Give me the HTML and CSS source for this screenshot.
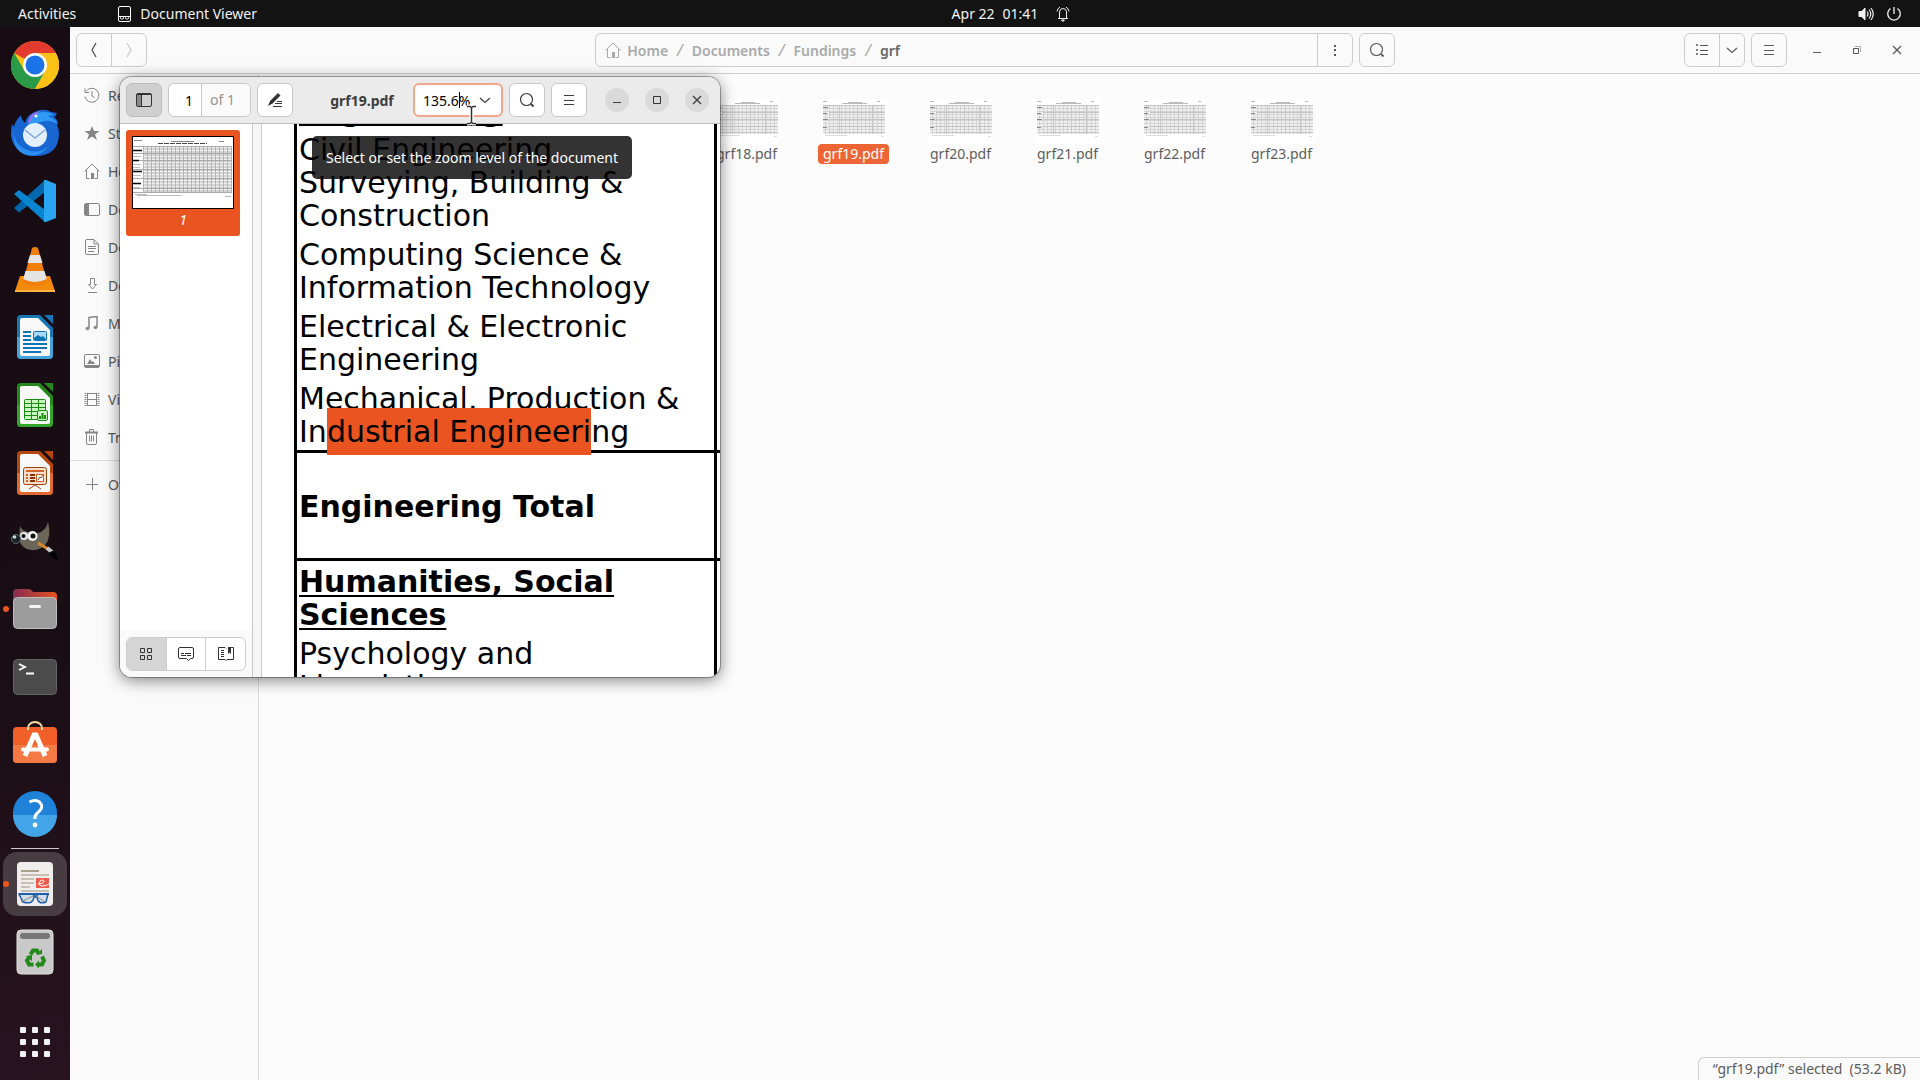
FILE: index.html
```html
<!DOCTYPE html>
<html lang="en">
<head>
    <meta charset="UTF-8">
    <meta name="viewport" content="width=device-width, initial-scale=1.0">
    <title>grf19.pdf</title>
    <link rel="stylesheet" href="styles.css">
</head>
<body>
    <!-- Shared symbols -->
    <svg class="defs" aria-hidden="true">
        <defs>
            <pattern id="cells" width="4" height="3" patternUnits="userSpaceOnUse">
                <rect width="4" height="3" fill="#f0f0f0"/>
                <path d="M0 .5h3M3.5 0v3" stroke="#d4d4d4" stroke-width="1"/>
            </pattern>
            <pattern id="cells-dark" width="4" height="3" patternUnits="userSpaceOnUse">
                <rect width="4" height="3" fill="#f4f4f4"/>
                <path d="M0 1h3M3.5 0v3" stroke="#b4b4b4" stroke-width="1"/>
            </pattern>
            <symbol id="sheet" viewBox="0 0 64 45">
                <rect width="64" height="45" fill="#fff"/>
                <path d="M1 2.500h4M26 3.500h14M20 4.500h25M55 2.500h3" stroke="#bbb"/>
                <rect x="1" y="6" width="62" height="29" fill="url(#cells)"/>
                <path d="M1 6.500h62M7 13.500h56M7 20.500h56M7 27.500h56M7 33.500h56" stroke="#c4c4c4"/>
                <path d="M17.500 6v29M35.500 6v29M50.500 6v29" stroke="#cacaca"/>
                <path d="M1 8.500h5M1 14.500h4M1 20.500h5M1 28.500h4" stroke="#888"/>
                <path d="M3 36.500h22M59 37.500h3" stroke="#ddd"/>
            </symbol>
            <symbol id="house" viewBox="0 0 16 16">
                <path d="M.5 8.500 8 1l7.500 7.500M2.500 7v8.500h3M13.500 7v8.500h-3" fill="none" stroke="currentColor"/>
                <path d="M7 10h3v6H7z" fill="currentColor"/>
            </symbol>
            <symbol id="lens" viewBox="0 0 16 16">
                <circle cx="7.500" cy="7.500" r="6" fill="none" stroke="currentColor" stroke-width="1.200"/>
                <path d="m12 12 2.500 2.500" stroke="currentColor" stroke-width="1.800"/>
            </symbol>
            <symbol id="burger" viewBox="0 0 16 16">
                <path d="M3 3.500h10M3 8.500h10M3 12.500h10" stroke="currentColor"/>
            </symbol>
            <symbol id="chevron" viewBox="0 0 16 16">
                <path d="m3 6 5 4.500L13 6" fill="none" stroke="currentColor" stroke-width="1.200"/>
            </symbol>
            <symbol id="cross" viewBox="0 0 16 16">
                <path d="m4 4 8 8M12 4l-8 8" stroke="currentColor" stroke-width="1.400"/>
            </symbol>
            <symbol id="minus" viewBox="0 0 16 16">
                <path d="M4 10.500h8" stroke="currentColor"/>
            </symbol>
            <symbol id="plus" viewBox="0 0 16 16">
                <path d="M2 8.500h12M8.500 2v12" stroke="currentColor"/>
            </symbol>
        </defs>
    </svg>

    <header class="topbar">
        <div class="topbar-left">
            <button class="topbar-item">Activities</button>
            <button class="topbar-item app-menu">
                <svg width="14" height="16" viewBox="0 0 14 16" fill="none" stroke="#fff">
                    <rect x=".5" y=".5" width="12" height="15" rx="1.500"/>
                    <path d="M1 10.500h11"/>
                    <rect x="2.500" y="10.500" width="3" height="2.500" rx="1"/>
                    <rect x="7.500" y="10.500" width="3" height="2.500" rx="1"/>
                </svg>
                Document Viewer
            </button>
        </div>
        <button class="topbar-item clock">
            <span>Apr 22</span><span>01:41</span>
            <svg width="14" height="16" viewBox="0 0 14 16" fill="none" stroke="#eee">
                <path d="M2 12.500h10M3.500 12V6a3.500 3.500 0 0 1 7 0v6M1 5.500A6 6 0 0 1 4 1M13 5.500A6 6 0 0 0 10 1"/>
                <path d="M5.500 14h3l-1.500 1.500z" fill="#eee"/>
            </svg>
        </button>
        <button class="topbar-item tray" aria-label="System menu">
            <svg width="16" height="16" viewBox="0 0 16 16" fill="none" stroke="#f2f2f2">
                <path d="M1 5.500h2.500L7 2v12l-3.500-3.500H1z" fill="#f2f2f2"/>
                <path d="M9 5.500q2 2.500 0 5M11 3.500q3.500 4.500 0 9M13 2q4.500 6 0 12" stroke-width="1.200"/>
            </svg>
            <svg width="16" height="16" viewBox="0 0 16 16" fill="none" stroke="#f2f2f2" stroke-width="1.300">
                <path d="M8 1v7M4.500 2.500a6.300 6.300 0 1 0 7 0"/>
            </svg>
        </button>
    </header>

    <div class="desktop">
        <nav class="dock" aria-label="Dock">
            <button class="dock-item" aria-label="Google Chrome">
                <svg width="48" height="48" viewBox="0 0 48 48">
                    <circle cx="24" cy="24" r="24" fill="#fbc116"/>
                    <path d="M24 24 3.200 12A24 24 0 0 1 44.800 12H24z" fill="#e33b2e"/>
                    <path d="M3.200 12A24 24 0 0 0 24 48l10.400-18L24 24 13.600 30z" fill="#2a9a48"/>
                    <path d="M24 12h20.800A24 24 0 0 1 24 48l10.400-18z" fill="#fbc116"/>
                    <circle cx="24" cy="24" r="12" fill="#fff"/>
                    <circle cx="24" cy="24" r="9.500" fill="#1a73e8"/>
                </svg>
            </button>
            <button class="dock-item" aria-label="Thunderbird">
                <svg width="48" height="48" viewBox="0 0 48 48">
                    <path d="M24 47C10 47 0 37 0 24q0-5 1-9l2 3q1-6 7-12 0 4 4 8 2-9 12-12 8-3 14 1l6 1q-1 3-3 4 4 3 4 7l-2-1q3 5 3 10 0 23-24 23z" fill="#1766d2"/>
                    <path d="M17 12q5-9 16-9 7 0 10 3-4 0-6 1 8 3 10 9-6-5-13-4-9 1-17 8z" fill="#2f9bf5"/>
                    <path d="M3 18q-2 14 9 21 14 8 26-2-9 12-23 9Q0 41 3 18z" fill="#2b8ef0"/>
                    <path d="M17 14q1-11 13-12-9 4-11 12z" fill="#9d6bf0"/>
                    <circle cx="24" cy="26" r="12" fill="#e3effc"/>
                    <path d="m14 21 10 8 10-8" fill="none" stroke="#7fa9dd" stroke-width="1.500"/>
                    <circle cx="25" cy="7" r="1.500" fill="#fff"/>
                </svg>
            </button>
            <button class="dock-item" aria-label="Visual Studio Code">
                <svg width="48" height="48" viewBox="0 0 48 48">
                    <path d="M3 31 34 3v12L8 35.500z" fill="#0367ae"/>
                    <path d="m3 17 5-4 26 20v12z" fill="#0a85d1"/>
                    <path d="m33 3 2 0 10 4v34l-10 4-2 0z" fill="#2aa5f2"/>
                </svg>
            </button>
            <button class="dock-item" aria-label="VLC">
                <svg width="48" height="48" viewBox="0 0 48 48">
                    <path d="M9 31h30l5 15v1H4v-1z" fill="#f28a0c"/>
                    <path d="M4 45h40v2H4z" fill="#ffb347"/>
                    <path d="M21 3q3-2 6 0l9 34q-12 8-24 0z" fill="#f07f09"/>
                    <path d="m19 10h10l2.500 8h-15zM14.500 26h19l2.300 8q-12 6-23.600 0z" fill="#e4e4e4"/>
                </svg>
            </button>
            <button class="dock-item" aria-label="LibreOffice Writer">
                <svg width="48" height="48" viewBox="0 0 48 48">
                    <path d="M10 2h19l13 13v27q0 4-4 4H10q-4 0-4-4V6q0-4 4-4z" fill="#1577b5"/>
                    <path d="M6 24h36v18q0 4-4 4H10q-4 0-4-4z" fill="#45a3d9"/>
                    <path d="M11 5h16l12 12v24q0 2-2 2H11q-2 0-2-2V7q0-2 2-2z" fill="#f8f8f8"/>
                    <path d="M33 2h9v9z" fill="#1577b5"/>
                    <path d="M12 19h8M12 23h8M12 27h8M12 31h24M12 35h24M12 39h18" stroke="#0f74b8" stroke-width="2"/>
                    <rect x="22.500" y="18.500" width="13" height="9" rx="1" fill="#a9dbf7" stroke="#0f74b8"/>
                    <path d="M23 27v-2l4-3 3 2 2-1 3 3v1z" fill="#0f74b8"/>
                </svg>
            </button>
            <button class="dock-item" aria-label="LibreOffice Calc">
                <svg width="48" height="48" viewBox="0 0 48 48">
                    <path d="M10 2h19l13 13v27q0 4-4 4H10q-4 0-4-4V6q0-4 4-4z" fill="#24891a"/>
                    <path d="M6 24h36v18q0 4-4 4H10q-4 0-4-4z" fill="#33a527"/>
                    <path d="M11 5h16l12 12v24q0 2-2 2H11q-2 0-2-2V7q0-2 2-2z" fill="#f8f8f8"/>
                    <path d="M33 2h9v9z" fill="#24891a"/>
                    <rect x="13.500" y="18.500" width="21" height="20" rx="1" fill="#c9f5c0" stroke="#198a10"/>
                    <path d="M13 22.500h22M13 26.500h22M13 30.500h22M13 34.500h22M20.500 18v20M27.500 18v20" stroke="#198a10"/>
                    <rect x="26.500" y="29.500" width="10" height="10" rx="1.500" fill="#c9f5c0" stroke="#198a10"/>
                    <path d="M29 38v-3M31.500 38v-6M34 38v-4" stroke="#198a10" stroke-width="2"/>
                </svg>
            </button>
            <button class="dock-item" aria-label="LibreOffice Impress">
                <svg width="48" height="48" viewBox="0 0 48 48">
                    <path d="M10 2h19l13 13v27q0 4-4 4H10q-4 0-4-4V6q0-4 4-4z" fill="#b8460f"/>
                    <path d="M6 24h36v18q0 4-4 4H10q-4 0-4-4z" fill="#e26a30"/>
                    <path d="M11 5h16l12 12v24q0 2-2 2H11q-2 0-2-2V7q0-2 2-2z" fill="#f8f8f8"/>
                    <path d="M33 2h9v9z" fill="#b8460f"/>
                    <rect x="12.500" y="18.500" width="23" height="17" rx="2" fill="#f9ddcb" stroke="#a0410d"/>
                    <path d="M15 22h18" stroke="#d0622a" stroke-width="2"/>
                    <path d="M19 26h5M19 29h5M19 32h5" stroke="#8a3200" stroke-width="2"/>
                    <path d="M15 26h2M15 29h2M15 32h2" stroke="#d0622a" stroke-width="2"/>
                    <rect x="25.500" y="25.500" width="7" height="7" fill="#fff" stroke="#d0622a"/>
                    <path d="m27 31 2-3 1 1 2-3M24 36l-6 4M24 36l6 4" fill="none" stroke="#a0410d"/>
                </svg>
            </button>
            <button class="dock-item" aria-label="GIMP">
                <svg width="48" height="48" viewBox="0 -3 48 48">
                    <path d="M9 6q2 5 8 6 6 1 10 1Q35 11 37 2q4 15-3 23-6 6-14 5-9-1-12-10z" fill="#6b665a"/>
                    <circle cx="13" cy="16" r="4" fill="#e8e8e8"/>
                    <circle cx="21.500" cy="16" r="5" fill="#f4f4f4"/>
                    <circle cx="12.500" cy="16" r="2" fill="#111"/>
                    <circle cx="22" cy="16" r="2.500" fill="#111"/>
                    <circle cx="5" cy="19" r="4.500" fill="#1b2327" stroke="#59666b"/>
                    <circle cx="3.500" cy="17" r="1.800" fill="#c9dbe0"/>
                    <path d="m27 23 10 6" stroke="#d6892b" stroke-width="3"/>
                    <path d="m36 28 5 4" stroke="#c8c8c8" stroke-width="4"/>
                    <path d="M38 33q4-4 7 0l2 7q-7-1-9-7z" fill="#050505"/>
                </svg>
            </button>
            <button class="dock-item running" aria-label="Files">
                <svg width="48" height="48" viewBox="0 -2 48 48">
                    <defs>
                        <linearGradient id="folder"><stop stop-color="#832c52"/><stop offset="1" stop-color="#e95420"/></linearGradient>
                    </defs>
                    <path d="M2 6q0-4 4-4h12q2 0 4 3h20q4 0 4 4v10H2z" fill="url(#folder)"/>
                    <rect x="2.500" y="10.500" width="43" height="31" rx="4" fill="#9c9c9c" stroke="#bdbdbd"/>
                    <rect x="18" y="18" width="12" height="3" rx="1.500" fill="#f5f5f5"/>
                </svg>
            </button>
            <button class="dock-item" aria-label="Terminal">
                <svg width="48" height="48" viewBox="0 0 48 48">
                    <rect x="2.500" y="6.500" width="43" height="35" rx="4" fill="#4b4b4b" stroke="#656565"/>
                    <path d="m8 11 6 3-6 3M15 20.500h8" fill="none" stroke="#fff" stroke-width="1.800"/>
                </svg>
            </button>
            <button class="dock-item" aria-label="Ubuntu Software">
                <svg width="48" height="48" viewBox="0 0 48 48">
                    <rect x="2" y="6" width="44" height="36" rx="4" fill="#f2602a"/>
                    <path d="M2 24h44v14q0 4-4 4H6q-4 0-4-4z" fill="#f47a45"/>
                    <path d="M17 9V7a7 6 0 0 1 14 0v2" fill="none" stroke="#f7d9a0" stroke-width="2"/>
                    <path d="m14 35 9-21h2l9 21" fill="none" stroke="#fff" stroke-width="5"/>
                    <path d="M12 28.500h24" stroke="#fff" stroke-width="4" stroke-linecap="round"/>
                </svg>
            </button>
            <button class="dock-item" aria-label="Help">
                <svg width="48" height="48" viewBox="0 0 48 48">
                    <circle cx="24" cy="24" r="22" fill="#1f82d8"/>
                    <path d="M2 26a22 22 0 0 0 44 0z" fill="#42a5e8"/>
                    <path d="M18.500 13q6-3 10 0 5 5-1 10-4 3-3.500 7" fill="none" stroke="#fff" stroke-width="3"/>
                    <circle cx="24" cy="36" r="2.400" fill="#fff"/>
                </svg>
            </button>
            <hr class="dock-line">
            <button class="dock-item running active" aria-label="Document Viewer">
                <svg width="48" height="48" viewBox="0 0 48 48">
                    <rect x="6" y="2" width="36" height="44" rx="4" fill="#efeeec"/>
                    <path d="M10 11h18" stroke="#a8a08c" stroke-width="2"/>
                    <path d="M10 15h28M10 19h13M10 23h13M10 27h9M10 31h28" stroke="#c5c0b2" stroke-width="2"/>
                    <rect x="25" y="18" width="13" height="10" fill="#f35a4e"/>
                    <path d="M27 24q6 0 6-3-1-2-4 0-2 5 2 5 4 0 7-2" fill="none" stroke="#fff"/>
                    <path d="M8 34h14l1 2h3l1-2h10l-2 8q-8 3-9-5h-3q-1 8-11 5z" fill="#d5dde4" stroke="#1d5fae" stroke-width="1.500"/>
                    <path d="M8 34h30" stroke="#1d5fae" stroke-width="2"/>
                    <path d="m10 42 12-6M34 42l-9-6" stroke="#888"/>
                </svg>
            </button>
            <button class="dock-item" aria-label="Trash">
                <svg width="48" height="48" viewBox="0 0 48 48">
                    <rect x="6" y="2" width="36" height="44" rx="4" fill="#c9c9c9" stroke="#e2e2e2"/>
                    <rect x="9" y="5" width="30" height="6" rx="3" fill="#777"/>
                    <g fill="none" stroke="#23891b" stroke-width="4">
                        <path d="m19.500 26.500 2.500-4h4l2 3.500M31 28.500l2 4-2 4h-4M22.500 36.500H18l-2-4 2-3"/>
                    </g>
                    <path d="m25 27 6-1v-5zM28 32.500v8l-4-4zM15 28l6-1v6z" fill="#23891b"/>
                </svg>
            </button>
            <button class="dock-item apps" aria-label="Show Applications">
                <svg width="30" height="30" viewBox="0 0 30 30" fill="#f2f2f2">
                    <rect width="6" height="6" rx="1"/><rect x="12" width="6" height="6" rx="1"/><rect x="24" width="6" height="6" rx="1"/>
                    <rect y="12" width="6" height="6" rx="1"/><rect x="12" y="12" width="6" height="6" rx="1"/><rect x="24" y="12" width="6" height="6" rx="1"/>
                    <rect y="24" width="6" height="6" rx="1"/><rect x="12" y="24" width="6" height="6" rx="1"/><rect x="24" y="24" width="6" height="6" rx="1"/>
                </svg>
            </button>
        </nav>

        <!-- File manager -->
        <main class="files">
            <div class="files-header">
                <div class="group nav-group">
                    <button aria-label="Back"><svg width="16" height="16" viewBox="0 0 16 16"><path d="M10 1 6 8l4 7" fill="none" stroke="#555" stroke-width="1.300"/></svg></button>
                    <button aria-label="Forward" disabled><svg width="16" height="16" viewBox="0 0 16 16"><path d="m6 1 4 7-4 7" fill="none" stroke="#ccc" stroke-width="1.300"/></svg></button>
                </div>
                <div class="location">
                    <div class="group pathbar">
                        <div class="crumbs">
                            <a href="#"><svg width="16" height="16"><use href="#house"/></svg>Home</a><i>/</i>
                            <a href="#">Documents</a><i>/</i>
                            <a href="#">Fundings</a><i>/</i>
                            <a href="#" class="current">grf</a>
                        </div>
                        <button aria-label="Folder menu"><svg width="16" height="16" viewBox="0 0 16 16"><path d="M7 3h2v2H7zM7 7h2v2H7zM7 12h2v2H7z" fill="#555"/></svg></button>
                    </div>
                    <div class="group"><button aria-label="Search"><svg width="16" height="16"><use href="#lens"/></svg></button></div>
                </div>
                <div class="files-tools">
                    <div class="group">
                        <button aria-label="List view"><svg width="16" height="16" viewBox="0 0 16 16" fill="none" stroke="#555"><path d="M6 3.500h8M6 8.500h8M6 12.500h8M2.500 2.500h1v1h-1zM2.500 7.500h1v1h-1zM2.500 11.500h1v1h-1z"/></svg></button>
                        <button class="narrow" aria-label="View options"><svg width="16" height="16"><use href="#chevron"/></svg></button>
                    </div>
                    <div class="group"><button aria-label="Menu"><svg width="16" height="16"><use href="#burger"/></svg></button></div>
                    <div class="win-buttons">
                        <button aria-label="Minimize"><svg width="16" height="16"><use href="#minus"/></svg></button>
                        <button aria-label="Restore"><svg width="16" height="16" viewBox="0 0 16 16" fill="none" stroke="#555"><path d="M4.500 6.500h5v5h-5z"/><path d="M6 4.500h5.500V10" stroke="#aaa"/></svg></button>
                        <button aria-label="Close"><svg width="16" height="16"><use href="#cross"/></svg></button>
                    </div>
                </div>
            </div>
            <div class="files-body">
                <aside class="places">
                    <a href="#"><svg width="16" height="16" viewBox="0 0 16 16" fill="none" stroke="currentColor"><path d="M2 4.500a7 7 0 1 1-1 5M1 1.500v4h4M8 4v5l2.500 1.500"/></svg>Recent</a>
                    <a href="#"><svg width="16" height="16" viewBox="0 0 16 16" fill="currentColor"><path d="m8 1 2 5h5.500L11 9.500 13 15l-5-3.500L3 15l2-5.500L.5 6H6z"/></svg>Starred</a>
                    <a href="#"><svg width="16" height="16"><use href="#house"/></svg>Home</a>
                    <a href="#"><svg width="16" height="16" viewBox="0 0 16 16"><rect x=".5" y="2.500" width="15" height="12" rx="1.500" fill="none" stroke="currentColor"/><path d="M1 3h4v11H1z" fill="currentColor"/></svg>Desktop</a>
                    <a href="#"><svg width="16" height="16" viewBox="0 0 16 16" fill="none" stroke="currentColor"><path d="M3 .5h7L14.500 5v9q0 1.500-1.500 1.500H3q-1.500 0-1.500-1.500V2Q1.500.5 3 .5zM4 7.500h8M4 9.500h8M4 12.500h6M10 1v4h4"/></svg>Documents</a>
                    <a href="#"><svg width="16" height="16" viewBox="0 0 16 16" fill="none" stroke="currentColor"><path d="M6.500 1.500h4v6h2l-4 4.500-4-4.500h2zM4 15.500h9"/></svg>Downloads</a>
                    <a href="#"><svg width="16" height="16" viewBox="0 0 16 16" fill="none" stroke="currentColor"><path d="M5 13V2.500l8-1V12" stroke-width="1.500"/><ellipse cx="3.500" cy="13.500" rx="1.500" ry="1.300" fill="currentColor"/><ellipse cx="11.500" cy="12.500" rx="1.500" ry="1.300" fill="currentColor"/></svg>Music</a>
                    <a href="#"><svg width="16" height="16" viewBox="0 0 16 16"><rect x=".5" y="1.500" width="15" height="13" rx="1.500" fill="none" stroke="currentColor"/><path d="M1 12h14v2H1zM3 11l3-5 2 3 1-1 2 3z" fill="currentColor"/><circle cx="11.500" cy="4.500" r="1.500" fill="currentColor"/></svg>Pictures</a>
                    <a href="#"><svg width="16" height="16" viewBox="0 0 16 16" fill="none" stroke="currentColor"><path d="M3.500 2v13M12.500 2v13M3 2.500h10M3 8.500h10M3 14.500h10"/><path d="M1.500 2v13M14.500 2v13" stroke-dasharray="1 1" stroke-width="2"/></svg>Videos</a>
                    <a href="#"><svg width="16" height="16" viewBox="0 0 16 16" fill="none" stroke="currentColor"><path d="M1 3.500h13" stroke-width="2"/><path d="M5.500 3V.5h4V3M2.500 4v10q0 1.500 1.500 1.500h7q1.500 0 1.500-1.500V4M5.500 6.500v6M7.500 6.500v6M9.500 6.500v6"/></svg>Trash</a>
                    <hr>
                    <a href="#"><svg width="16" height="16"><use href="#plus"/></svg>Other Locations</a>
                </aside>
                <div class="icons">
                    <div class="file"><svg width="64" height="45"><use href="#sheet"/></svg><span>grf14.pdf</span></div>
                    <div class="file"><svg width="64" height="45"><use href="#sheet"/></svg><span>grf15.pdf</span></div>
                    <div class="file"><svg width="64" height="45"><use href="#sheet"/></svg><span>grf16.pdf</span></div>
                    <div class="file"><svg width="64" height="45"><use href="#sheet"/></svg><span>grf17.pdf</span></div>
                    <div class="file"><svg width="64" height="45"><use href="#sheet"/></svg><span>grf18.pdf</span></div>
                    <div class="file selected"><svg width="64" height="45"><use href="#sheet"/></svg><span>grf19.pdf</span></div>
                    <div class="file"><svg width="64" height="45"><use href="#sheet"/></svg><span>grf20.pdf</span></div>
                    <div class="file"><svg width="64" height="45"><use href="#sheet"/></svg><span>grf21.pdf</span></div>
                    <div class="file"><svg width="64" height="45"><use href="#sheet"/></svg><span>grf22.pdf</span></div>
                    <div class="file"><svg width="64" height="45"><use href="#sheet"/></svg><span>grf23.pdf</span></div>
                </div>
            </div>
            <div class="status">“grf19.pdf” selected&nbsp; (53.2 kB)</div>
        </main>
    </div>

    <!-- Document viewer window -->
    <section class="viewer">
        <div class="viewer-header">
            <button class="btn pressed" aria-label="Side pane"><svg width="16" height="16" viewBox="0 0 16 16"><path d="M1 3h4v11H1z" fill="#888"/><rect x=".5" y="1.500" width="15" height="13" rx="1.500" fill="none" stroke="#333"/><path d="M1 2.500h14M5.500 2v12" stroke="#333"/></svg></button>
            <div class="page-box">
                <input type="text" value="1" id="page" aria-label="Page">
                <label for="page">of 1</label>
            </div>
            <button class="btn" aria-label="Annotate"><svg width="16" height="16" viewBox="0 0 16 16"><path d="m1 14 2-5 8-8 2.500 2.500-8 8z" fill="#333"/><path d="M10 9.500h5M8 11.500h7M6 14.500h9" stroke="#333"/></svg></button>
            <h1>grf19.pdf</h1>
            <div class="zoom-box">
                <input type="text" value="135.6%" aria-label="Zoom">
                <button aria-label="Zoom levels"><svg width="16" height="16"><use href="#chevron"/></svg></button>
                <span class="caret"></span>
            </div>
            <button class="btn" aria-label="Find"><svg width="16" height="16"><use href="#lens"/></svg></button>
            <button class="btn" aria-label="File options"><svg width="16" height="16"><use href="#burger"/></svg></button>
            <div class="win-buttons round">
                <button aria-label="Minimize"><svg width="16" height="16"><use href="#minus"/></svg></button>
                <button aria-label="Maximize"><svg width="16" height="16" viewBox="0 0 16 16"><path d="M4.500 4.500h7v7h-7z" fill="none" stroke="#333"/></svg></button>
                <button aria-label="Close"><svg width="16" height="16"><use href="#cross"/></svg></button>
            </div>
        </div>
        <div class="viewer-body">
            <aside class="pane">
                <div class="pages">
                    <div class="page-thumb">
                        <svg width="102" height="73" viewBox="0 0 102 73">
                            <rect width="102" height="73" fill="#000"/>
                            <rect x="1" y="1" width="100" height="71" fill="#fff"/>
                            <path d="M2 4.500h8M39 5.500h23M87 5.500h5" stroke="#888"/>
                            <path d="M26 7.500h49" stroke="#444" stroke-dasharray="5 1"/>
                            <rect x="11" y="10" width="89" height="47" fill="url(#cells-dark)"/>
                            <path d="M1 10.500h99M1 17.500h99M1 24.500h99M1 33.500h99M1 42.500h99M1 52.500h99M1 56.500h99" stroke="#aaa"/>
                            <path d="M1 14.500h9M1 24.500h6M1 35.500h9M1 47.500h8" stroke="#000" stroke-width="1.500"/>
                            <path d="M1 20.500h8M1 28.500h8M1 31.500h7M1 39.500h8M1 51.500h7" stroke="#bbb"/>
                            <path d="M3 58.500h12M5 59.500h44M93 60.500h6" stroke="#bbb"/>
                        </svg>
                        <span>1</span>
                    </div>
                </div>
                <div class="pane-footer">
                    <div class="group solid">
                        <button class="pressed" aria-label="Thumbnails"><svg width="16" height="16" viewBox="0 0 16 16" fill="none" stroke="#333"><path d="M2.500 2.500h4v4h-4zM9.500 2.500h4v4h-4zM2.500 9.500h4v4h-4zM9.500 9.500h4v4h-4z"/></svg></button>
                        <button aria-label="Annotations"><svg width="16" height="16" viewBox="0 0 16 16" fill="none" stroke="#333"><path d="M2 1.500h12q1.500 0 1.500 1.500v8q0 1.500-1.500 1.500h-1.500l-2 2-2-2H2Q.5 12.500.5 11V3Q.5 1.500 2 1.500zM3 7.500h3M7 7.500h6M3 9.500h5M9 9.500h4"/></svg></button>
                        <button aria-label="Bookmarks"><svg width="16" height="16" viewBox="0 0 16 16" fill="none" stroke="#333"><path d="M2 1.500h5l1 1M13 1.500h2.500v12H9l-1 1-1-1H.5v-12H2M3 4.500h3M3 6.500h3M3 8.500h3M3 10.500h3"/><path d="M10 1h3v7l-1.500-1.500L10 8z" fill="#333" stroke="none"/></svg></button>
                    </div>
                </div>
            </aside>
            <div class="paper">
                <table class="fund">
                    <tr><td><b class="section">Engineering</b></td><td></td></tr>
                    <tr><td>Civil Engineering<br>Surveying, Building &amp;<br>Construction</td><td></td></tr>
                    <tr><td>Computing Science &amp;<br>Information Technology</td><td></td></tr>
                    <tr><td>Electrical &amp; Electronic<br>Engineering</td><td></td></tr>
                    <tr class="ruled"><td>Mechanical, Production &amp;<br>In<mark>dustrial Engineeri</mark>ng</td><td></td></tr>
                    <tr class="ruled total"><td><b>Engineering Total</b></td><td></td></tr>
                    <tr><td><b class="section">Humanities, Social<br>Sciences</b></td><td></td></tr>
                    <tr><td>Psychology and<br>Linguistics</td><td></td></tr>
                </table>
            </div>
        </div>
    </section>

    <div class="tooltip" role="tooltip">Select or set the zoom level of the document</div>
    <svg class="pointer" width="11" height="22" viewBox="0 0 11 22">
        <path d="M1 2.500h3l1.500 1 1.500-1h3M5.500 3v16M1 19.500h3l1.500-1 1.500 1h3" fill="none" stroke="#fff" stroke-width="4"/>
        <path d="M1 2.500h3l1.500 1 1.500-1h3M5.500 3v16M1 19.500h3l1.500-1 1.500 1h3" fill="none" stroke="#333" stroke-width="1.500"/>
    </svg>
</body>
</html>
```
FILE: styles.css
```css
* {
    box-sizing: border-box;
}

body {
    margin: 0;
    height: 100vh;
    display: flex;
    flex-direction: column;
    overflow: hidden;
    font-family: "Noto Sans", "Open Sans", sans-serif;
    font-size: 14px;
    color: #3d3d3d;
    background: #1a0e15;
}

button,
input {
    font: inherit;
    color: inherit;
    margin: 0;
    padding: 0;
    border: none;
    background: none;
}

button {
    display: flex;
    align-items: center;
    justify-content: center;
}

svg {
    display: block;
    flex: none;
}

a {
    color: inherit;
    text-decoration: none;
}

.defs {
    position: absolute;
    width: 0;
    height: 0;
}

/* Top bar */
.topbar {
    display: grid;
    grid-template-columns: 1fr auto 1fr;
    height: 27px;
    padding: 0 18px;
    background: #131313;
    color: #f2f2f2;
}

.topbar-left {
    display: flex;
    gap: 42px;
}

.topbar-item {
    gap: 8px;
    white-space: nowrap;
}

.clock svg {
    margin-left: 10px;
}

.clock {
    padding-left: 102px;
}

.tray {
    justify-self: end;
    gap: 12px;
}

.desktop {
    flex: 1;
    display: flex;
    min-height: 0;
}

/* Dock */
.dock {
    display: flex;
    flex-direction: column;
    align-items: center;
    gap: 4px;
    width: 70px;
    padding: 6px 0;
    background: linear-gradient(160deg, #170c13, #1a0e15 60%, #28131f);
}

.dock-item {
    position: relative;
    flex: none;
    width: 64px;
    height: 64px;
    border-radius: 14px;
}

.dock-item.active {
    background: #483c43;
}

.dock-item.running::before {
    content: "";
    position: absolute;
    left: 0;
    top: 29px;
    width: 6px;
    height: 6px;
    border-radius: 50%;
    background: #e95420;
}

.dock-line {
    width: 48px;
    margin: -1px 0;
    border: none;
    border-top: 1px solid #d0ccce;
}

.dock-item.apps {
    margin-top: auto;
}

/* Files window */
.files {
    position: relative;
    flex: 1;
    display: flex;
    flex-direction: column;
    background: #fcfcfc;
    color: #5c5c5c;
}

.files-header {
    display: grid;
    grid-template-columns: 1fr 43.5% 1fr;
    align-items: center;
    height: 47px;
    padding: 0 6px;
    background: #fafafa;
    border-bottom: 1px solid #d0d0d0;
}

.group {
    display: flex;
    height: 34px;
    border: 1px solid #cdcdcd;
    border-radius: 6px;
    overflow: hidden;
}

.group button {
    width: 34px;
}

.group button + button,
.crumbs + button {
    width: 35px;
    border-left: 1px solid #cdcdcd;
}

.group .narrow.narrow {
    width: 25px;
}

.nav-group {
    justify-self: start;
}

.location {
    display: flex;
    gap: 6px;
}

.location .pathbar {
    flex: 1;
}

.crumbs {
    flex: 1;
    display: flex;
    align-items: center;
    gap: 9px;
    padding-left: 9px;
    font-weight: 600;
    color: #a9a9a9;
}

.crumbs a {
    display: flex;
    align-items: center;
    gap: 6px;
}

.crumbs i {
    font-weight: 400;
    font-size: 16px;
}

.crumbs .current {
    color: #666;
}

.files-tools {
    display: flex;
    justify-self: end;
    gap: 6px;
}

.win-buttons {
    display: flex;
    align-items: center;
    gap: 16px;
    padding: 0 5px 0 12px;
}

.win-buttons button {
    width: 24px;
    height: 24px;
}

.files-body {
    flex: 1;
    display: flex;
}

.places {
    width: 189px;
    padding-top: 2px;
    background: #fafafa;
    border-right: 1px solid #dcdcdc;
}

.places a {
    display: flex;
    align-items: center;
    gap: 8px;
    height: 38px;
    padding-left: 14px;
}

.places svg {
    color: #858585;
}

.places hr {
    margin: 4px 0;
    border: none;
    border-top: 1px solid #dcdcdc;
}

.icons {
    flex: 1;
    display: grid;
    grid-template-columns: repeat(auto-fill, 107px);
    align-content: start;
    padding: 25px 0 0 6px;
}

.file {
    display: flex;
    flex-direction: column;
    align-items: center;
}

.file span {
    padding: 0 5px;
    line-height: 20px;
    border-radius: 4px;
}

.file.selected span {
    background: #ed6534;
    color: #fff;
}

.status {
    position: absolute;
    right: 0;
    bottom: 0;
    height: 23px;
    padding: 0 14px;
    line-height: 22px;
    background: #fafafa;
    border: 1px solid #d0d0d0;
    border-width: 1px 0 0 1px;
    border-radius: 6px 0 0 0;
}

/* Document viewer */
.viewer {
    position: absolute;
    left: 120px;
    top: 77px;
    width: 600px;
    height: 600px;
    display: flex;
    flex-direction: column;
    overflow: hidden;
    border-radius: 12px;
    background: #fff;
    box-shadow: 0 0 0 1px rgba(0, 0, 0, 0.3), 0 3px 16px rgba(0, 0, 0, 0.5);
}

.viewer-header {
    display: flex;
    align-items: center;
    gap: 6px;
    height: 47px;
    padding: 0 6px;
    background: #ebebeb;
    border-bottom: 1px solid #bfbfbf;
}

.viewer-header h1 {
    flex: 1;
    margin: 0;
    padding-left: 18px;
    font-size: 14px;
    font-weight: 700;
    text-align: center;
}

.btn,
.page-box,
.zoom-box {
    flex: none;
    width: 36px;
    height: 34px;
    background: #fff;
    border: 1px solid #c8c8c8;
    border-radius: 6px;
}

.btn.pressed {
    background: #cfcfcf;
    border-color: #bdbdbd;
}

.page-box {
    display: flex;
    align-items: center;
    width: 83px;
    overflow: hidden;
}

.page-box input {
    width: 33px;
    height: 100%;
    padding-right: 8px;
    text-align: right;
    color: #000;
    border-right: 1px solid #c8c8c8;
}

.page-box label {
    flex: 1;
    padding-left: 8px;
    line-height: 32px;
    color: #929292;
    background: #fafafa;
}

.zoom-box {
    position: relative;
    display: flex;
    align-items: center;
    width: 90px;
    border: 2px solid #f3a58b;
}

.zoom-box input {
    width: 62px;
    padding-left: 8px;
    color: #000;
}

.caret {
    position: absolute;
    left: 44px;
    top: 7px;
    width: 1px;
    height: 16px;
    background: #000;
}

.round {
    padding-right: 5px;
}

.round button {
    border-radius: 50%;
    background: #dadada;
}

.viewer-body {
    flex: 1;
    display: flex;
    min-height: 0;
}

.pane {
    display: flex;
    flex-direction: column;
    width: 133px;
    border-right: 1px solid #c8c8c8;
}

.pages {
    flex: 1;
    padding: 6px;
}

.page-thumb {
    width: 114px;
    height: 106px;
    padding: 6px;
    border-radius: 3px;
    background: #e95420;
    color: #fff;
    font-style: italic;
    text-align: center;
    line-height: 22px;
}

.pane-footer {
    padding: 6px;
    background: #fafafa;
}

.solid {
    width: 120px;
    background: #fff;
}

.solid button,
.solid button + button {
    flex: 1;
}

.solid .pressed {
    background: #d5d5d5;
}

.paper {
    flex: 1;
    min-width: 0;
    margin-left: 8px;
    padding-left: 32px;
    overflow: hidden;
    border-left: 1px solid #c8c8c8;
    box-shadow: -8px 0 0 #f6f6f6;
}

.fund {
    table-layout: fixed;
    width: 500px;
    margin-top: -34px;
    border-spacing: 0;
    font-family: Verdana, "DejaVu Sans", sans-serif;
    font-size: 30px;
    line-height: 33px;
    color: #000;
    white-space: nowrap;
}

.fund td {
    padding: 4px 2px 2px;
}

.fund td:first-child {
    width: 423px;
    border: solid #000;
    border-width: 0 3px;
}

.fund .ruled td {
    border-bottom: 3px solid #000;
}

.fund .total td {
    height: 108px;
}

.section {
    text-decoration: underline;
    text-decoration-thickness: 2px;
    text-decoration-skip-ink: none;
    text-underline-offset: 3px;
}

.fund mark {
    position: relative;
    padding: 6px 0;
    color: #000;
    background: #e95420;
}

.tooltip {
    position: absolute;
    left: 312px;
    top: 136px;
    padding: 0 14px;
    line-height: 43px;
    border-radius: 5px;
    color: #fff;
    background: rgba(0, 0, 0, 0.8);
}

.pointer {
    position: absolute;
    left: 466px;
    top: 104px;
}
```
